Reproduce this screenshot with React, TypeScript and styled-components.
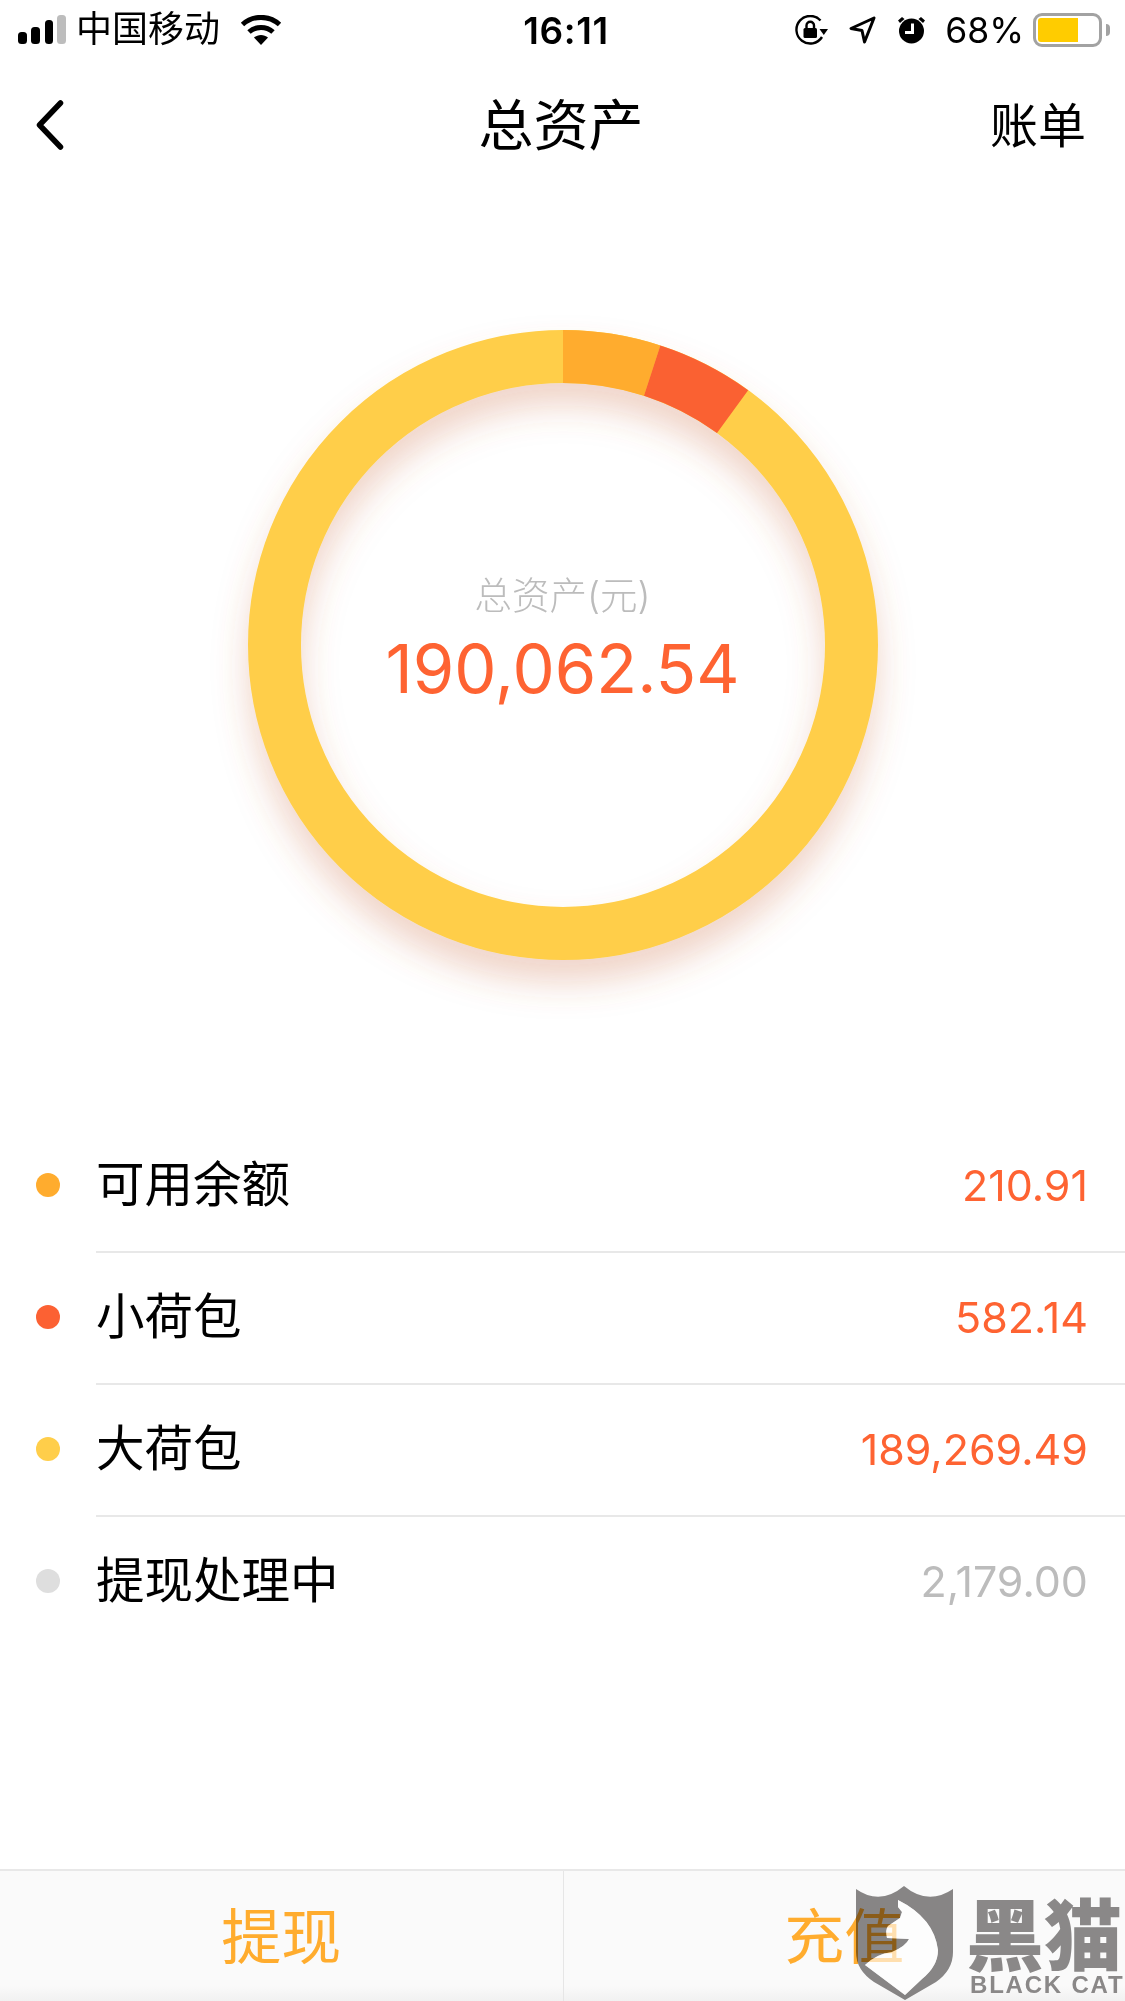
import React from "react";
import styled, { createGlobalStyle } from "styled-components";

const CJK = `"Liberation Sans", "Noto Sans CJK SC", sans-serif`;
const NUM = `Inter, "Noto Sans CJK SC", sans-serif`;

const Global = createGlobalStyle`
  html, body { margin: 0; padding: 0; background: #fff; }
  body { font-family: ${CJK}; overflow: hidden; }
`;

const Page = styled.div`
  position: relative;
  width: 1125px;
  height: 2001px;
  overflow: hidden;
  display: flex;
  flex-direction: column;
  background: #fff;
  color: #000;
`;

const StatusBar = styled.header`
  height: 60px;
  display: grid;
  grid-template-columns: 1fr auto 1fr;
  align-items: center;
  padding: 0 23px 0 18px;
`;
const StatusLeft = styled.div`
  display: flex;
  align-items: center;
`;
const Carrier = styled.span`
  margin: 0 20px 0 10px;
  font-size: 36px;
  line-height: 60px;
`;
const Clock = styled.span`
  font-family: ${NUM};
  font-size: 37px;
  font-weight: 600;
  letter-spacing: 0.6px;
  margin-left: 12px;
`;
const StatusRight = styled.div`
  display: flex;
  align-items: center;
  justify-content: flex-end;
`;
const Percent = styled.span`
  font-family: ${NUM};
  font-weight: 400;
  font-size: 35.5px;
  margin: 0 9px 0 19px;
`;
const Battery = styled.div`
  position: relative;
  width: 69px;
  height: 34px;
  box-sizing: border-box;
  border: 3px solid #a2a2a2;
  border-radius: 9px;
  padding: 2px;
  &::after {
    content: "";
    position: absolute;
    right: -11px;
    top: 8px;
    width: 4px;
    height: 12px;
    background: #a2a2a2;
    border-radius: 0 6px 6px 0;
  }
`;
const BatteryFill = styled.div`
  height: 100%;
  background: #ffcc00;
  border-radius: 3px 0 0 3px;
`;

const NavBar = styled.nav`
  height: 130px;
  display: grid;
  grid-template-columns: 1fr auto 1fr;
  align-items: center;
  padding: 0 39px 0 36px;
`;
const Title = styled.h1`
  margin: 2px 0 0;
  font-size: 55px;
  font-weight: 400;
  line-height: 1;
`;
const NavAction = styled.a`
  justify-self: end;
  margin-top: 3px;
  font-size: 48px;
  line-height: 1;
`;

const ChartSection = styled.section`
  position: relative;
  padding-top: 104.5px;
  height: 931px;
  box-sizing: border-box;
  display: flex;
  justify-content: center;
`;
const ChartFrame = styled.div`
  position: relative;
  width: 700px;
  height: 700px;
`;
const CenterText = styled.div`
  position: absolute;
  inset: 0;
  display: flex;
  flex-direction: column;
  align-items: center;
  padding-top: 277px;
  box-sizing: border-box;
`;
const CenterLabel = styled.div`
  font-family: ${NUM};
  font-weight: 300;
  font-size: 37.5px;
  line-height: 48px;
  color: #bcbcbc;
`;
const CenterValue = styled.div`
  font-family: ${NUM};
  font-weight: 400;
  font-size: 67px;
  line-height: 80px;
  margin-top: 9px;
  color: #fe6332;
`;

const List = styled.ul`
  list-style: none;
  margin: 0;
  padding: 0;
`;
const Row = styled.li`
  display: flex;
  height: 132px;
  padding-left: 36px;
  align-items: stretch;
`;
const Dot = styled.span<{ $color: string }>`
  width: 24px;
  height: 24px;
  border-radius: 50%;
  margin: 52px 36px 0 0;
  flex: none;
  background: ${(p) => p.$color};
`;
const RowBody = styled.div<{ $last?: boolean }>`
  flex: 1;
  display: flex;
  align-items: center;
  justify-content: space-between;
  box-sizing: border-box;
  padding: 0 37px 2px 0;
  border-bottom: 2px solid ${(p) => (p.$last ? "transparent" : "#e8e8e8")};
`;
const RowLabel = styled.span`
  font-size: 48.5px;
  line-height: 1;
`;
const RowValue = styled.span<{ $muted?: boolean }>`
  font-family: ${NUM};
  font-weight: 400;
  font-size: 43px;
  line-height: 1;
  color: ${(p) => (p.$muted ? "#bcbcbc" : "#fe6332")};
`;

const Footer = styled.footer`
  margin-top: auto;
  height: 132px;
  box-sizing: border-box;
  display: grid;
  grid-template-columns: 1fr 1fr;
  border-top: 2px solid #e8e8e8;
  background: linear-gradient(#fafafa 0, #fafafa 88%, #f1f1f1 100%);
`;
const FooterButton = styled.button<{ $divider?: boolean }>`
  border: 0;
  padding: 0 0 8px;
  background: transparent;
  font-family: inherit;
  font-size: 60px;
  color: #ffac2e;
  border-left: ${(p) => (p.$divider ? "1px solid #e6e6e6" : "0")};
`;

const Watermark = styled.div`
  position: absolute;
  left: 856px;
  top: 1886px;
  display: flex;
  gap: 13px;
  pointer-events: none;
`;
const ShieldBox = styled.div`
  position: relative;
  width: 97px;
  height: 114px;
  flex: none;
`;
const ShieldSvg = styled.svg`
  display: block;
  mix-blend-mode: multiply;
`;
const CatSvg = styled.svg`
  position: absolute;
  left: 0;
  top: 0;
`;
const WatermarkWords = styled.div`
  display: flex;
  flex-direction: column;
  color: #8a8888;
`;
const WatermarkCn = styled.div`
  font-family: "Noto Sans CJK SC", sans-serif;
  font-weight: 900;
  font-size: 78px;
  line-height: 68px;
  margin-top: 11px;
  white-space: nowrap;
`;
const WatermarkEn = styled.div`
  margin-left: 4px;
  font-weight: 700;
  font-size: 24px;
  line-height: 20px;
  letter-spacing: 1.8px;
  margin-top: 10px;
  white-space: nowrap;
`;

const CX = 350;
const CY = 350;
const RO = 315;
const RI = 262;
const pt = (r: number, deg: number) => {
  const a = (deg * Math.PI) / 180;
  return `${(CX + r * Math.sin(a)).toFixed(2)} ${(CY - r * Math.cos(a)).toFixed(2)}`;
};
const sector = (a1: number, a2: number) =>
  `M${pt(RO, a1)} A${RO} ${RO} 0 0 1 ${pt(RO, a2)} L${pt(RI, a2)} A${RI} ${RI} 0 0 0 ${pt(RI, a1)} Z`;

const CAT =
  "M42 14 Q78 32 82 64 Q82 80 66 93 L49 109 L9 79 Q20 68 36 66 Q50 60 53 53 L31 52 Q29 44 32 40 L44 32 L46 26 L42 21 Z";

const rows = [
  { label: "可用余额", value: "210.91", color: "#ffac2e" },
  { label: "小荷包", value: "582.14", color: "#fc6133" },
  { label: "大荷包", value: "189,269.49", color: "#ffce4a" },
  { label: "提现处理中", value: "2,179.00", color: "#dedede", muted: true },
];

export default function App() {
  return (
    <Page>
      <Global />
      <StatusBar>
        <StatusLeft>
          <svg width="48" height="30" viewBox="0 0 48 30">
            <rect x="0" y="17" width="9" height="12" rx="3.5" fill="#000" />
            <rect x="13" y="12" width="9" height="17" rx="3.5" fill="#000" />
            <rect x="27" y="5" width="8" height="24" rx="3.5" fill="#000" />
            <rect x="39" y="0" width="9" height="29" rx="3.5" fill="#bdbdbd" />
          </svg>
          <Carrier>中国移动</Carrier>
          <svg width="42" height="30" viewBox="0 0 42 30">
            <path d="M2.5 9.5 C13 0 29 0 39.5 9.5" fill="none" stroke="#000" strokeWidth="5" />
            <path d="M9 17 C15.5 11 26.5 11 33 17" fill="none" stroke="#000" strokeWidth="5" />
            <path d="M21 30 L14 22.5 C18 19 24 19 28 22.5 Z" fill="#000" />
          </svg>
        </StatusLeft>
        <Clock>16:11</Clock>
        <StatusRight>
          <svg width="33" height="30" viewBox="0 0 33 30">
            <path d="M25.5 5.5 A13.8 13.8 0 1 0 27 22" fill="none" stroke="#000" strokeWidth="2.4" />
            <path d="M24.5 14 H33 L28.8 20 Z" fill="#000" />
            <rect x="8.5" y="13" width="13.5" height="10" rx="1.5" fill="#000" />
            <path d="M11.5 13 V10.5 A3.7 3.7 0 0 1 19 10.5 V13" fill="none" stroke="#000" strokeWidth="2.4" />
          </svg>
          <svg width="27" height="28" viewBox="0 0 27 28" style={{ marginLeft: 21 }}>
            <path d="M25 2 L2 12.5 L13 14.5 L15.5 26 Z" fill="none" stroke="#000" strokeWidth="3" strokeLinejoin="round" />
          </svg>
          <svg width="29" height="28" viewBox="0 0 29 28" style={{ marginLeft: 21 }}>
            <circle cx="14.5" cy="15" r="12.5" fill="#000" />
            <path d="M1 4.5 L5 1 L7.5 3 L3 7 Z M28 4.5 L24 1 L21.5 3 L26 7 Z" fill="#000" />
            <path d="M15.5 7.5 V16.5 H8" fill="none" stroke="#fff" strokeWidth="3" />
          </svg>
          <Percent>68%</Percent>
          <Battery>
            <BatteryFill style={{ width: "68%" }} />
          </Battery>
        </StatusRight>
      </StatusBar>

      <NavBar>
        <svg width="28" height="50" viewBox="0 0 28 50">
          <path d="M24.5 3 L3.5 25 L24.5 47" fill="none" stroke="#000" strokeWidth="5.5" strokeLinecap="round" strokeLinejoin="round" />
        </svg>
        <Title>总资产</Title>
        <NavAction>账单</NavAction>
      </NavBar>

      <ChartSection>
        <ChartFrame>
          <svg width="700" height="700" viewBox="0 0 700 700" style={{ overflow: "visible" }}>
            <defs>
              <filter id="ringShadow" x="-20%" y="-20%" width="140%" height="140%">
                <feDropShadow dx="0" dy="22" stdDeviation="17" floodColor="#c8653a" floodOpacity="0.28" />
              </filter>
            </defs>
            <g filter="url(#ringShadow)">
              <circle cx={CX} cy={CY} r={(RO + RI) / 2} fill="none" stroke="#ffce49" strokeWidth={RO - RI} />
            </g>
            <path d={sector(0, 18)} fill="#ffac2e" />
            <path d={sector(18, 36)} fill="#fa6132" />
          </svg>
          <CenterText>
            <CenterLabel>总资产(元)</CenterLabel>
            <CenterValue>190,062.54</CenterValue>
          </CenterText>
        </ChartFrame>
      </ChartSection>

      <List>
        {rows.map((r, i) => (
          <Row key={r.label}>
            <Dot $color={r.color} />
            <RowBody $last={i === rows.length - 1}>
              <RowLabel>{r.label}</RowLabel>
              <RowValue $muted={r.muted}>{r.value}</RowValue>
            </RowBody>
          </Row>
        ))}
      </List>

      <Footer>
        <FooterButton>提现</FooterButton>
        <FooterButton $divider>充值</FooterButton>
      </Footer>

      <Watermark>
        <ShieldBox>
          <ShieldSvg width="97" height="114" viewBox="0 0 97 114">
            <path
              fillRule="evenodd"
              fill="#8a8888"
              d={`M0 3 Q24 20 48 0 Q72 20 97 3 V66 Q97 84 80 96 L49 114 L18 96 Q0 84 0 66 Z ${CAT}`}
            />
          </ShieldSvg>
          <CatSvg width="97" height="114" viewBox="0 0 97 114">
            <path d={CAT} fill="#fff" fillOpacity="0.62" />
          </CatSvg>
        </ShieldBox>
        <WatermarkWords>
          <WatermarkCn>黑猫</WatermarkCn>
          <WatermarkEn>BLACK CAT</WatermarkEn>
        </WatermarkWords>
      </Watermark>
    </Page>
  );
}
